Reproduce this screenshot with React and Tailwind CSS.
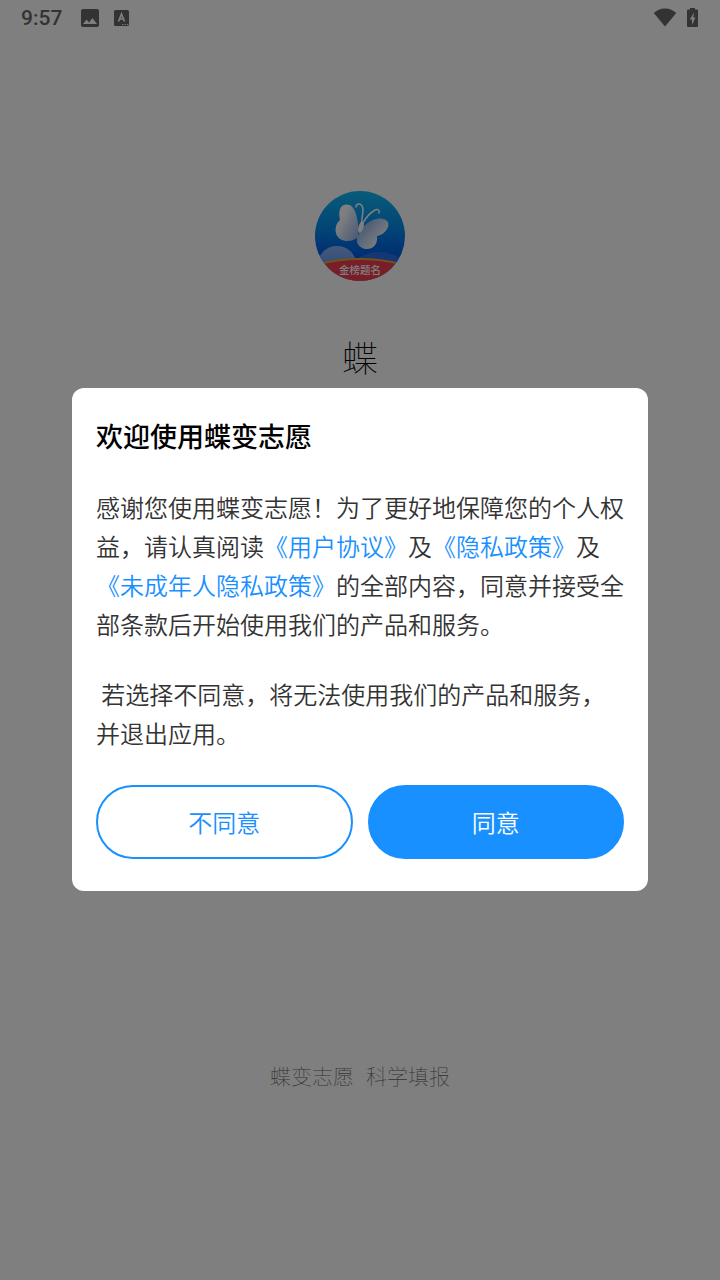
import React from 'react';

const CJK = "font-['Noto_Sans_CJK_SC',sans-serif]";

const StatusBar = () => (
  <header className="flex h-9 items-center justify-between px-[21px] text-[#666666]">
    <div className="flex items-center">
      <span className="font-[Roboto,sans-serif] text-[21px] leading-9 font-medium">9:57</span>
      <svg className="ml-4 h-6 w-6" viewBox="0 0 24 24" fill="currentColor" aria-label="Image">
        <path d="M21 19V5c0-1.100-.9-2-2-2H5c-1.100 0-2 .9-2 2v14c0 1.100.9 2 2 2h14c1.100 0 2-.9 2-2zM8.500 13.500l2.500 3.010L14.500 12l4.500 6H5l3.500-4.500z" />
      </svg>
      <svg className="ml-3 h-4 w-4" viewBox="0 0 16 16" aria-label="Keyboard">
        <rect x="0" y="0" width="15" height="16" rx="1.5" fill="currentColor" />
        <path d="M4.500 11.500L7.500 4l3 7.500M5.500 9h4" fill="none" stroke="#fff" strokeWidth="1.700" />
        <path d="M8 14.500h1.200M10.500 14.500h1.200M13 14.500h1.200" stroke="#fff" strokeWidth="1.200" />
      </svg>
    </div>
    <div className="flex items-center gap-2.5">
      <svg className="h-5 w-6" viewBox="0 0 24 20" fill="currentColor" aria-label="Wi-Fi">
        <path d="M12 18.500L.8 5C3.500 2.300 7.500.5 12 .5s8.500 1.800 11.200 4.500z" />
      </svg>
      <svg className="h-5 w-3" viewBox="0 0 12 20" aria-label="Charging">
        <path d="M3 0h5v1.500h2q1 0 1 1v15.500q0 1-1 1H1q-1 0-1-1V2.500q0-1 1-1h2z" fill="currentColor" />
        <path d="M7 4.500L2.800 11.500H5v5.500L8.500 9.500H6.200z" fill="#fff" />
      </svg>
    </div>
  </header>
);

const Logo = () => (
  <svg className="h-[90px] w-[90px]" viewBox="0 0 90 90" role="img" aria-label="金榜题名">
    <defs>
      <linearGradient id="sky" x1="0" y1="0" x2="0" y2="1">
        <stop offset="0" stopColor="#10b8f4" />
        <stop offset="0.4" stopColor="#068cec" />
        <stop offset="0.75" stopColor="#0058e4" />
      </linearGradient>
      <linearGradient id="wing" x1="0.2" y1="0.3" x2="0.9" y2="0.9">
        <stop offset="0.1" stopColor="#ffffff" />
        <stop offset="1" stopColor="#9dbcec" />
      </linearGradient>
      <linearGradient id="wingRight" x1="0.8" y1="0.9" x2="0.1" y2="0.3">
        <stop offset="0.1" stopColor="#ffffff" />
        <stop offset="1" stopColor="#8fb4ea" />
      </linearGradient>
      <linearGradient id="hill" x1="0" y1="0" x2="0" y2="1">
        <stop offset="0" stopColor="#8ab4f8" />
        <stop offset="1" stopColor="#4a86ee" />
      </linearGradient>
      <clipPath id="disc">
        <circle cx="45" cy="45" r="45" />
      </clipPath>
    </defs>
    <g clipPath="url(#disc)">
      <rect width="90" height="90" fill="url(#sky)" />
      <ellipse cx="64" cy="77" rx="26" ry="16" fill="#2a70e8" />
      <ellipse cx="22" cy="73" rx="19" ry="18" fill="url(#hill)" />
      <path d="M0 73Q45 61 90 73V90H0z" fill="#f0a030" />
      <path d="M0 75Q45 63 90 75V90H0z" fill="#ee3c50" />
      <path d="M43 46C44 39 43 29 41 23C39 16 35 13 31 13.500C25 14 23 20 25 29C19 34 19 44 25 48C30 51 38 51 43 46z" fill="url(#wing)" />
      <path d="M45 41C48 35 55 28 64 27.500C71 27 75 31 73 36C71 41 67 44 62 45C63 52 59 58 52 58C44 58 38 50 45 41z" fill="url(#wingRight)" />
      <path d="M46.500 32L48 20C48 15 46 13 44 13Q41 13 41 16M48 32Q53 23 60 19C63 18 65 19 64 22" fill="none" stroke="#fff" strokeWidth="1.500" strokeLinecap="round" />
      <ellipse cx="46" cy="36" rx="2.500" ry="6" fill="#fff" transform="rotate(16 46 36)" />
      <text x="45" y="83" textAnchor="middle" fill="#fff" fontSize="10.500" fontWeight="500" fontFamily="Noto Sans CJK SC">
        金榜题名
      </text>
    </g>
  </svg>
);

const PolicyLink = ({ children }) => (
  <a href="#" className="text-[#1890ff]">{children}</a>
);

const ConsentDialog = () => (
  <div className="fixed inset-0 flex items-center justify-center bg-black/50 pb-px">
    <section
      role="dialog"
      aria-modal="true"
      aria-labelledby="consent-title"
      className="w-4/5 rounded-xl bg-white px-6 pt-7 pb-8"
    >
      <h2 id="consent-title" className="text-[27px] leading-10 font-medium text-black">欢迎使用蝶变志愿</h2>

      <div className="mt-[31px] text-2xl leading-[39px] font-[350] text-[#333333]">
        <p>
          感谢您使用蝶变志愿！为了更好地保障您的个人权益，请认真阅读<PolicyLink>《用户协议》</PolicyLink>及<PolicyLink>《隐私政策》</PolicyLink>及<PolicyLink>《未成年人隐私政策》</PolicyLink>的全部内容，同意并接受全部条款后开始使用我们的产品和服务。
        </p>
        <p className="mt-[31px]">&nbsp;若选择不同意，将无法使用我们的产品和服务，并退出应用。</p>
      </div>

      {/* both buttons carry a border so they split the row evenly */}
      <div className="mt-[33px] flex gap-[15px]">
        <button type="button" className="h-[74px] flex-1 rounded-full border-2 border-[#1890ff] text-2xl font-[350] text-[#1890ff]">
          不同意
        </button>
        <button type="button" className="h-[74px] flex-1 rounded-full border-2 border-[#1890ff] bg-[#1890ff] text-2xl font-[350] text-white">
          同意
        </button>
      </div>
    </section>
  </div>
);

const App = () => (
  <div className={`flex min-h-screen flex-col bg-white ${CJK}`}>
    <StatusBar />
    <main className="flex flex-1 flex-col items-center pt-[155px]">
      <Logo />
      <h1 className="mt-[49px] text-4xl leading-[52px] font-thin text-black">蝶</h1>
    </main>
    <footer className="flex justify-center gap-3 pb-[189px] text-[21px] leading-8 font-thin text-[#666666]">
      <span>蝶变志愿</span>
      <span>科学填报</span>
    </footer>
    <ConsentDialog />
  </div>
);

export default App;
